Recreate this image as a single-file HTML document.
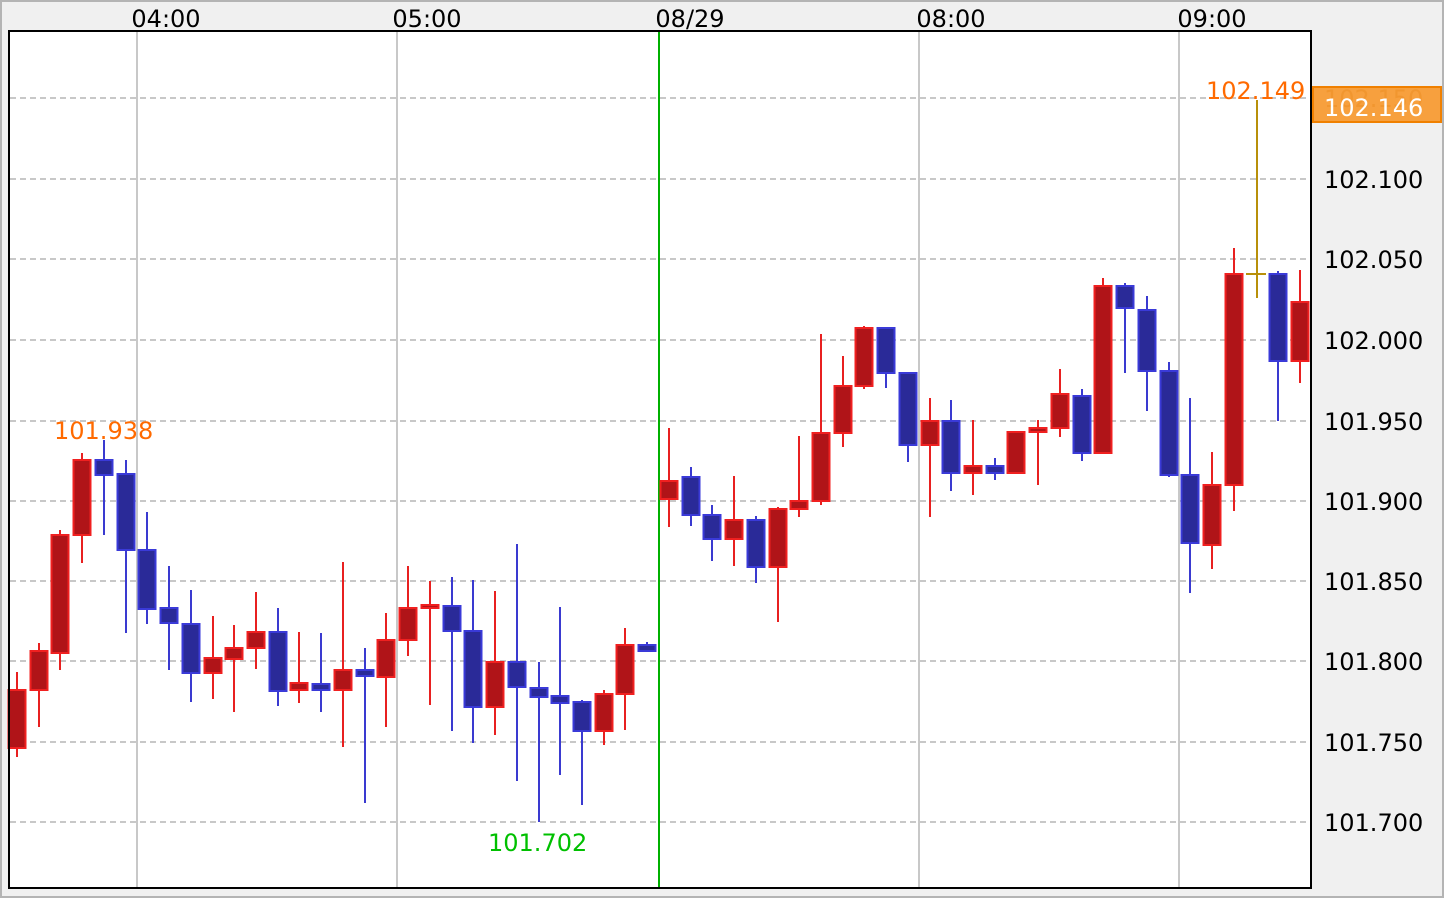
<!DOCTYPE html>
<html><head><meta charset="utf-8"><style>
html,body{margin:0;padding:0;background:#f0f0f0;}
svg{display:block;font-family:"DejaVu Sans","Liberation Sans",sans-serif;}
.r line{stroke:#e82020;stroke-width:2}
.r rect{fill:#b01418;stroke:#f02020;stroke-width:2}
.b line{stroke:#3a3ad0;stroke-width:2}
.b rect{fill:#2a2a98;stroke:#3a3ad8;stroke-width:2}
.g{stroke:#c8c8c8;stroke-width:2;stroke-dasharray:6 4}
.v{stroke:#c8c8c8;stroke-width:2}
.t{font-size:24px;fill:#000}
</style></head><body>
<svg width="1444" height="898" viewBox="0 0 1444 898">
<rect x="1" y="1" width="1442" height="896" fill="#f0f0f0" stroke="#b4b4b4" stroke-width="2"/>
<rect x="9" y="31" width="1302" height="857" fill="#fff"/>
<g>
<line class="g" x1="10" x2="1310" y1="98" y2="98"/>
<line class="g" x1="10" x2="1310" y1="179" y2="179"/>
<line class="g" x1="10" x2="1310" y1="259" y2="259"/>
<line class="g" x1="10" x2="1310" y1="340" y2="340"/>
<line class="g" x1="10" x2="1310" y1="421" y2="421"/>
<line class="g" x1="10" x2="1310" y1="501" y2="501"/>
<line class="g" x1="10" x2="1310" y1="581" y2="581"/>
<line class="g" x1="10" x2="1310" y1="661" y2="661"/>
<line class="g" x1="10" x2="1310" y1="742" y2="742"/>
<line class="g" x1="10" x2="1310" y1="822" y2="822"/>
<line class="v" x1="137" x2="137" y1="31" y2="888"/>
<line class="v" x1="397" x2="397" y1="31" y2="888"/>
<line class="v" x1="919" x2="919" y1="31" y2="888"/>
<line class="v" x1="1179" x2="1179" y1="31" y2="888"/>
<line x1="659" x2="659" y1="31" y2="888" stroke="#00b000" stroke-width="2"/>
</g>
<g class="r"><line x1="17" x2="17" y1="672" y2="757"/><rect x="8.5" y="690" width="17" height="58"/></g>
<g class="r"><line x1="39" x2="39" y1="643" y2="727"/><rect x="30.5" y="651" width="17" height="39"/></g>
<g class="r"><line x1="60" x2="60" y1="530" y2="670"/><rect x="51.5" y="535" width="17" height="118"/></g>
<g class="r"><line x1="82" x2="82" y1="453" y2="563"/><rect x="73.5" y="460" width="17" height="75"/></g>
<g class="b"><line x1="104" x2="104" y1="440" y2="535"/><rect x="95.5" y="460" width="17" height="15"/></g>
<g class="b"><line x1="126" x2="126" y1="460" y2="633"/><rect x="117.5" y="474" width="17" height="76"/></g>
<g class="b"><line x1="147" x2="147" y1="512" y2="624"/><rect x="138.5" y="550" width="17" height="59"/></g>
<g class="b"><line x1="169" x2="169" y1="566" y2="670"/><rect x="160.5" y="608" width="17" height="15"/></g>
<g class="b"><line x1="191" x2="191" y1="590" y2="702"/><rect x="182.5" y="624" width="17" height="49"/></g>
<g class="r"><line x1="213" x2="213" y1="616" y2="699"/><rect x="204.5" y="658" width="17" height="15"/></g>
<g class="r"><line x1="234" x2="234" y1="625" y2="712"/><rect x="225.5" y="648" width="17" height="11"/></g>
<g class="r"><line x1="256" x2="256" y1="592" y2="669"/><rect x="247.5" y="632" width="17" height="16"/></g>
<g class="b"><line x1="278" x2="278" y1="608" y2="706"/><rect x="269.5" y="632" width="17" height="59"/></g>
<g class="r"><line x1="299" x2="299" y1="632" y2="703"/><rect x="290.5" y="683" width="17" height="7"/></g>
<g class="b"><line x1="321" x2="321" y1="633" y2="712"/><rect x="312.5" y="684" width="17" height="6"/></g>
<g class="r"><line x1="343" x2="343" y1="562" y2="747"/><rect x="334.5" y="670" width="17" height="20"/></g>
<g class="b"><line x1="365" x2="365" y1="648" y2="803"/><rect x="356.5" y="670" width="17" height="6"/></g>
<g class="r"><line x1="386" x2="386" y1="613" y2="727"/><rect x="377.5" y="640" width="17" height="37"/></g>
<g class="r"><line x1="408" x2="408" y1="566" y2="656"/><rect x="399.5" y="608" width="17" height="32"/></g>
<g class="r"><line x1="430" x2="430" y1="581" y2="705"/><rect x="421.5" y="605" width="17" height="3"/></g>
<g class="b"><line x1="452" x2="452" y1="577" y2="731"/><rect x="443.5" y="606" width="17" height="25"/></g>
<g class="b"><line x1="473" x2="473" y1="580" y2="743"/><rect x="464.5" y="631" width="17" height="76"/></g>
<g class="r"><line x1="495" x2="495" y1="591" y2="735"/><rect x="486.5" y="662" width="17" height="45"/></g>
<g class="b"><line x1="517" x2="517" y1="544" y2="781"/><rect x="508.5" y="662" width="17" height="25"/></g>
<g class="b"><line x1="539" x2="539" y1="662" y2="822"/><rect x="530.5" y="688" width="17" height="9"/></g>
<g class="b"><line x1="560" x2="560" y1="607" y2="775"/><rect x="551.5" y="696" width="17" height="7"/></g>
<g class="b"><line x1="582" x2="582" y1="700" y2="805"/><rect x="573.5" y="702" width="17" height="29"/></g>
<g class="r"><line x1="604" x2="604" y1="690" y2="745"/><rect x="595.5" y="694" width="17" height="37"/></g>
<g class="r"><line x1="625" x2="625" y1="628" y2="730"/><rect x="616.5" y="645" width="17" height="49"/></g>
<g class="b"><line x1="647" x2="647" y1="642" y2="651"/><rect x="638.5" y="645" width="17" height="6"/></g>
<g class="r"><line x1="669" x2="669" y1="428" y2="527"/><rect x="660.5" y="481" width="17" height="18"/></g>
<g class="b"><line x1="691" x2="691" y1="467" y2="526"/><rect x="682.5" y="477" width="17" height="38"/></g>
<g class="b"><line x1="712" x2="712" y1="505" y2="561"/><rect x="703.5" y="515" width="17" height="24"/></g>
<g class="r"><line x1="734" x2="734" y1="476" y2="566"/><rect x="725.5" y="520" width="17" height="19"/></g>
<g class="b"><line x1="756" x2="756" y1="516" y2="583"/><rect x="747.5" y="520" width="17" height="47"/></g>
<g class="r"><line x1="778" x2="778" y1="507" y2="622"/><rect x="769.5" y="509" width="17" height="58"/></g>
<g class="r"><line x1="799" x2="799" y1="436" y2="517"/><rect x="790.5" y="501" width="17" height="8"/></g>
<g class="r"><line x1="821" x2="821" y1="334" y2="505"/><rect x="812.5" y="433" width="17" height="68"/></g>
<g class="r"><line x1="843" x2="843" y1="356" y2="447"/><rect x="834.5" y="386" width="17" height="47"/></g>
<g class="r"><line x1="864" x2="864" y1="326" y2="389"/><rect x="855.5" y="328" width="17" height="58"/></g>
<g class="b"><line x1="886" x2="886" y1="328" y2="388"/><rect x="877.5" y="328" width="17" height="45"/></g>
<g class="b"><line x1="908" x2="908" y1="373" y2="462"/><rect x="899.5" y="373" width="17" height="72"/></g>
<g class="r"><line x1="930" x2="930" y1="398" y2="517"/><rect x="921.5" y="421" width="17" height="24"/></g>
<g class="b"><line x1="951" x2="951" y1="400" y2="491"/><rect x="942.5" y="421" width="17" height="52"/></g>
<g class="r"><line x1="973" x2="973" y1="420" y2="495"/><rect x="964.5" y="466" width="17" height="7"/></g>
<g class="b"><line x1="995" x2="995" y1="458" y2="480"/><rect x="986.5" y="466" width="17" height="7"/></g>
<g class="r"><line x1="1016" x2="1016" y1="432" y2="473"/><rect x="1007.5" y="432" width="17" height="41"/></g>
<g class="r"><line x1="1038" x2="1038" y1="420" y2="485"/><rect x="1029.5" y="428" width="17" height="4"/></g>
<g class="r"><line x1="1060" x2="1060" y1="369" y2="437"/><rect x="1051.5" y="394" width="17" height="34"/></g>
<g class="b"><line x1="1082" x2="1082" y1="389" y2="461"/><rect x="1073.5" y="396" width="17" height="57"/></g>
<g class="r"><line x1="1103" x2="1103" y1="278" y2="453"/><rect x="1094.5" y="286" width="17" height="167"/></g>
<g class="b"><line x1="1125" x2="1125" y1="283" y2="373"/><rect x="1116.5" y="286" width="17" height="22"/></g>
<g class="b"><line x1="1147" x2="1147" y1="296" y2="411"/><rect x="1138.5" y="310" width="17" height="61"/></g>
<g class="b"><line x1="1169" x2="1169" y1="362" y2="477"/><rect x="1160.5" y="371" width="17" height="104"/></g>
<g class="b"><line x1="1190" x2="1190" y1="398" y2="593"/><rect x="1181.5" y="475" width="17" height="68"/></g>
<g class="r"><line x1="1212" x2="1212" y1="452" y2="569"/><rect x="1203.5" y="485" width="17" height="60"/></g>
<g class="r"><line x1="1234" x2="1234" y1="248" y2="511"/><rect x="1225.5" y="274" width="17" height="211"/></g>
<g><line x1="1257" x2="1257" y1="100" y2="298" stroke="#b8900a" stroke-width="2"/><line x1="1246" x2="1266" y1="274" y2="274" stroke="#b8900a" stroke-width="2"/></g>
<g class="b"><line x1="1278" x2="1278" y1="271" y2="421"/><rect x="1269.5" y="274" width="17" height="87"/></g>
<g class="r"><line x1="1300" x2="1300" y1="270" y2="383"/><rect x="1291.5" y="302" width="17" height="59"/></g>
<rect x="9" y="31" width="1302" height="857" fill="none" stroke="#000" stroke-width="2"/>
<g class="t" text-anchor="middle">
<text x="166" y="27">04:00</text>
<text x="427" y="27">05:00</text>
<text x="690" y="27">08/29</text>
<text x="951" y="27">08:00</text>
<text x="1212" y="27">09:00</text>
</g>
<g class="t">
<text x="1324" y="107" fill="#a06020">102.150</text>
<text x="1324" y="188">102.100</text>
<text x="1324" y="268">102.050</text>
<text x="1324" y="349">102.000</text>
<text x="1324" y="430">101.950</text>
<text x="1324" y="510">101.900</text>
<text x="1324" y="590">101.850</text>
<text x="1324" y="670">101.800</text>
<text x="1324" y="751">101.750</text>
<text x="1324" y="831">101.700</text>
</g>
<rect x="1313" y="87" width="128" height="35" fill="#f89a30" fill-opacity="0.93" stroke="#f08000" stroke-width="2"/>
<text class="t" x="1324" y="116" style="fill:#fff">102.146</text>
<text class="t" x="54" y="439" style="fill:#ff6a00">101.938</text>
<text class="t" x="488" y="851" style="fill:#00c000">101.702</text>
<text class="t" x="1206" y="99" style="fill:#ff6a00">102.149</text>
</svg>
</body></html>
